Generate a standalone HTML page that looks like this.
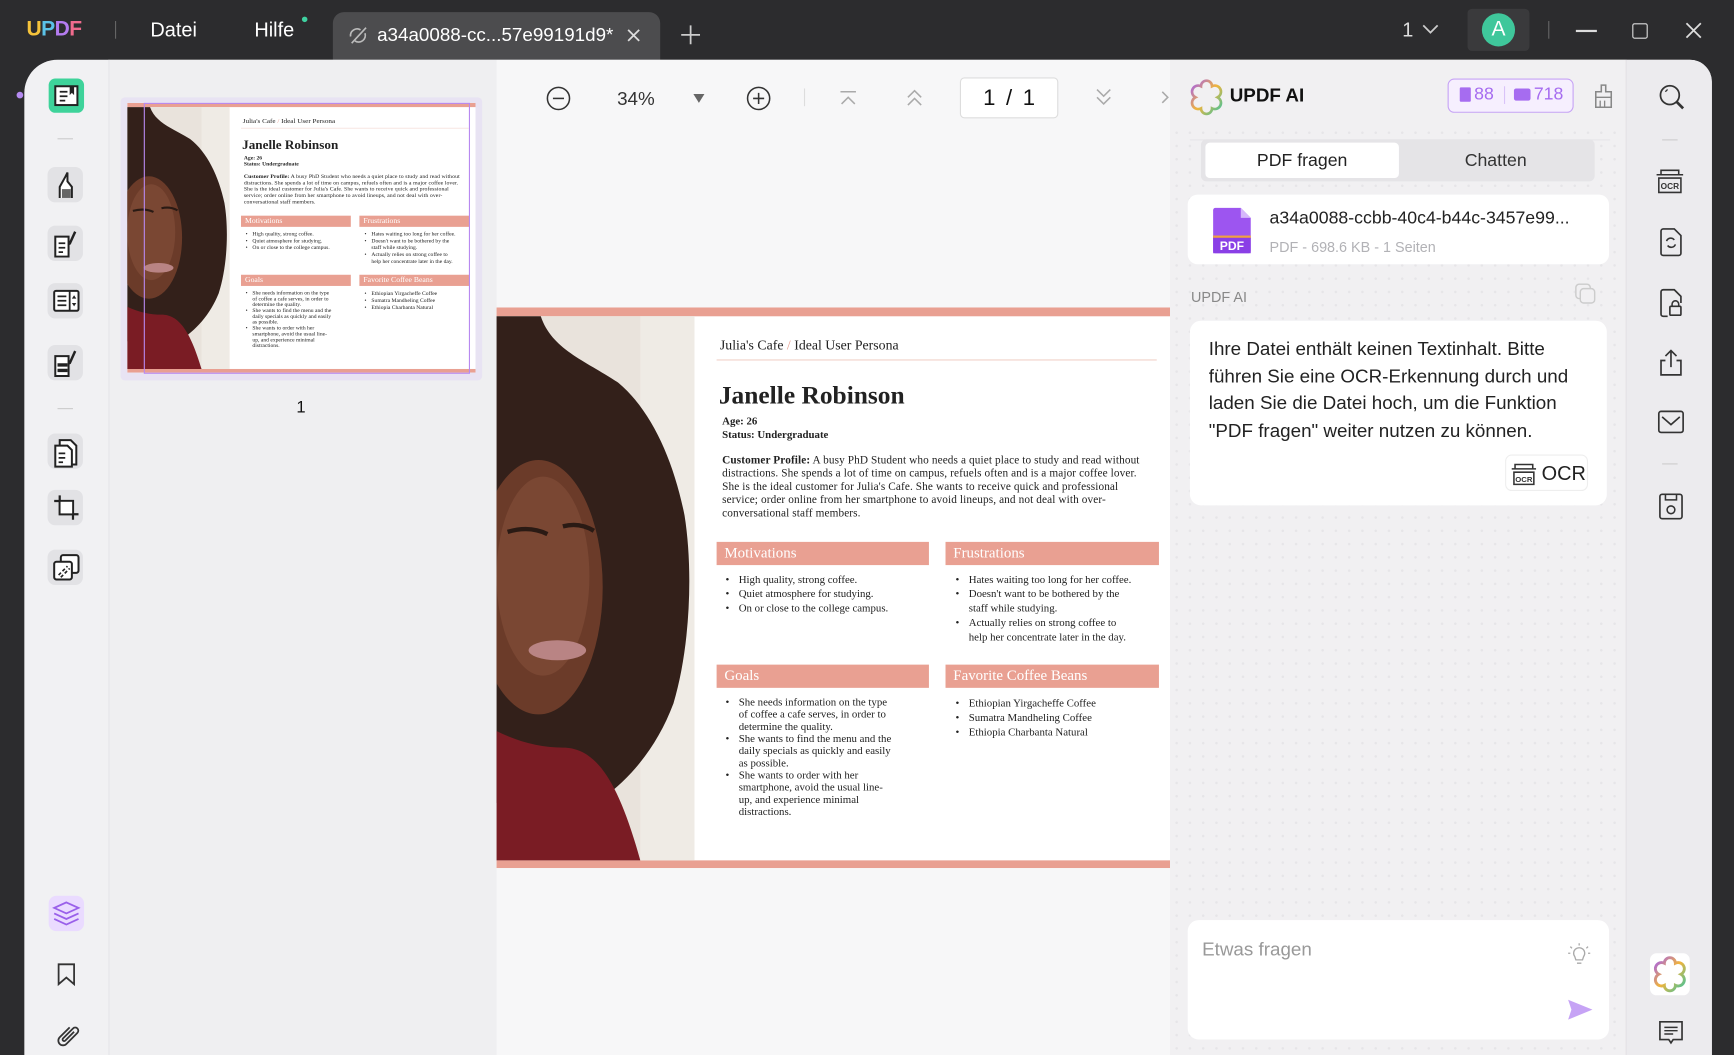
<!DOCTYPE html>
<html><head><meta charset="utf-8"><style>
*{box-sizing:border-box;margin:0;padding:0}
html,body{width:1734px;height:1055px;overflow:hidden;background:#2c2c2e}
#root{position:absolute;left:0;top:0;width:1568px;height:954px;transform:scale(1.10587);transform-origin:0 0;font-family:"Liberation Sans",sans-serif;background:#2c2c2e}
.a{position:absolute}
.t{color:#fff;font-size:18px}
.ic{position:absolute;width:32px;height:32px;border-radius:7px;background:#e2e2e5}
svg{position:absolute;overflow:visible}
.pg{position:absolute;width:609px;height:507px;background:#fff;font-family:"Liberation Serif",serif;color:#222;overflow:hidden}
.pg .bar{position:absolute;background:#e9a092;color:#fff;font-size:13.5px;padding:2px 7px;height:21px}
.pg ul{position:absolute;list-style:none;font-size:9.8px;line-height:13px}
.pg li{padding-left:17px;position:relative}
.pg li:before{content:"•";position:absolute;left:5px}
.pg .gl li{line-height:11px}
</style></head><body><div id="root">

<!-- title bar -->
<div class="a" style="left:24px;top:16px;font-weight:bold;font-size:19px;letter-spacing:-0.5px"><span style="color:#f5c33b">U</span><span style="color:#5bc2e7">P</span><span style="color:#b47cf0">D</span><span style="color:#f06b8d">F</span></div>
<div class="a" style="left:104px;top:19px;width:1px;height:16px;background:#666"></div>
<div class="a t" style="left:136px;top:17px">Datei</div>
<div class="a t" style="left:230px;top:17px">Hilfe</div>
<div class="a" style="left:273px;top:15px;width:5px;height:5px;border-radius:50%;background:#3fd1a0"></div>
<div class="a" style="left:301px;top:11px;width:296px;height:44px;background:#4c4c4e;border-radius:10px 10px 0 0"></div>
<svg style="left:314px;top:23px" width="20" height="18"><path d="M3 10a6 6 0 0 1 9-6M16 7a6 6 0 0 1-9 7M4 16L17 2" stroke="#bbb" stroke-width="1.5" fill="none"/></svg>
<div class="a t" style="left:341px;top:22px;font-size:17px">a34a0088-cc...57e99191d9*</div>
<svg style="left:567px;top:26px" width="12" height="12"><path d="M1 1L11 11M11 1L1 11" stroke="#ddd" stroke-width="1.6"/></svg>
<svg style="left:616px;top:23px" width="17" height="17"><path d="M8.5 0V17M0 8.5H17" stroke="#ccc" stroke-width="1.6"/></svg>
<div class="a t" style="left:1268px;top:17px;color:#ddd">1</div>
<svg style="left:1286px;top:22px" width="15" height="9"><path d="M1 1L7.5 7.5L14 1" stroke="#ccc" stroke-width="1.6" fill="none"/></svg>
<div class="a" style="left:1327px;top:8px;width:56px;height:38px;background:#3a3a3c;border-radius:4px"></div>
<div class="a" style="left:1340px;top:12px;width:30px;height:30px;border-radius:50%;background:#3fc79b;color:#fff;font-size:19px;text-align:center;line-height:30px">A</div>
<div class="a" style="left:1400px;top:19px;width:1px;height:16px;background:#666"></div>
<div class="a" style="left:1425px;top:27px;width:19px;height:1.5px;background:#ddd"></div>
<div class="a" style="left:1476px;top:21px;width:14px;height:14px;border:1.5px solid #ddd;border-radius:2px"></div>
<svg style="left:1524px;top:20px" width="15" height="15"><path d="M1 1L14 14M14 1L1 14" stroke="#ddd" stroke-width="1.6"/></svg>

<!-- main -->
<div class="a" style="left:22px;top:54px;width:1526px;height:900px;background:#f1f1f3;border-radius:30px 20px 0 0;overflow:hidden">
  <div class="a" style="left:76px;top:0;width:351px;height:900px;background:#efeff1;border-left:1px solid #e6e6e9"></div>
  <div class="a" style="left:427px;top:0;width:609px;height:900px;background:#f7f7f8"></div>
  <div class="a" style="left:1036px;top:0;width:412px;height:900px;background-color:#f1f0f2;background-image:radial-gradient(#e6e5e8 1px,transparent 1.3px);background-size:12px 12px"></div>
  <div class="a" style="left:1036px;top:0;width:412px;height:62px;background:#f1f0f2"></div>
  <div class="a" style="left:1448px;top:0;width:78px;height:900px;background:#ecebee;border-left:1px solid #e3e2e5"></div>
</div>
<div class="a" style="left:15px;top:83px;width:6px;height:6px;border-radius:50%;background:#b58af0"></div>

<!-- left toolbar icons -->
<div class="a" style="left:44px;top:71px;width:32px;height:31px;border-radius:6px;background:#3ed39a"></div>
<svg style="left:48px;top:76px" width="24" height="22"><rect x="2" y="2" width="20" height="17" fill="#fff" stroke="#222" stroke-width="1.8"/><path d="M6 7h7M6 11h7M6 15h5" stroke="#222" stroke-width="1.6"/><path d="M15 2v8l2-2 2 2V2z" fill="#222"/></svg>
<div class="a" style="left:52px;top:125px;width:14px;height:1px;background:#ccc"></div>
<div class="ic" style="left:43px;top:151px"></div>
<svg style="left:48px;top:154px" width="22" height="26"><path d="M6 25V15l5-9 2-4v8l4 5v10" fill="#fff" stroke="#222" stroke-width="1.8"/><path d="M8 25V17h8v8z" fill="#666"/></svg>
<div class="ic" style="left:43px;top:204px"></div>
<svg style="left:48px;top:207px" width="24" height="26"><path d="M2 7h12v18H2z" fill="#fff" stroke="#222" stroke-width="1.8"/><path d="M5 13h6M5 17h6M5 21h4" stroke="#222" stroke-width="1.6"/><path d="M19 2l2 1-5 11-2 1 0-2z" fill="#222"/></svg>
<div class="ic" style="left:43px;top:256px"></div>
<svg style="left:47px;top:261px" width="26" height="22"><rect x="2" y="2" width="22" height="18" rx="1.5" fill="#fff" stroke="#222" stroke-width="1.8"/><path d="M16 2v18M5 7h8M5 11h8M5 15h8" stroke="#222" stroke-width="1.6"/><path d="M18 9l2-3 2 3zM18 13l2 3 2-3z" fill="#222"/></svg>
<div class="ic" style="left:43px;top:312px"></div>
<svg style="left:48px;top:315px" width="24" height="26"><path d="M2 7h12v18H2z" fill="#fff" stroke="#222" stroke-width="1.8"/><path d="M4 15h9M4 20h9" stroke="#222" stroke-width="3"/><path d="M19 2l2 1-5 11-2 1 0-2z" fill="#222"/></svg>
<div class="a" style="left:52px;top:369px;width:14px;height:1px;background:#ccc"></div>
<div class="ic" style="left:43px;top:392px"></div>
<svg style="left:47px;top:396px" width="26" height="26"><path d="M7 2h10l5 5v17H7z" fill="#fff" stroke="#222" stroke-width="1.8"/><path d="M3 7h11l4 4v15H3z" fill="#fff" stroke="#222" stroke-width="1.8"/><path d="M6 14h6M6 18h6M6 22h4" stroke="#222" stroke-width="1.6"/></svg>
<div class="ic" style="left:43px;top:443px"></div>
<svg style="left:47px;top:446px" width="26" height="26"><path d="M7 2v17h17M2 7h17v17" fill="none" stroke="#222" stroke-width="2"/><rect x="7" y="7" width="12" height="12" fill="#fff" stroke="#222" stroke-width="1.5"/></svg>
<div class="ic" style="left:43px;top:497px"></div>
<svg style="left:47px;top:500px" width="26" height="26"><rect x="8" y="2" width="16" height="16" rx="2" fill="#fff" stroke="#222" stroke-width="1.8"/><rect x="2" y="8" width="16" height="16" rx="2" fill="#fff" stroke="#222" stroke-width="1.8"/><path d="M6 20l8-8M8 22l8-8" stroke="#222" stroke-width="1.5" stroke-dasharray="3 2"/></svg>
<div class="a" style="left:44px;top:810px;width:32px;height:32px;border-radius:7px;background:#eadbff"></div>
<svg style="left:47px;top:814px" width="26" height="24"><path d="M13 2l11 5-11 5L2 7z" fill="none" stroke="#9a60ea" stroke-width="1.6"/><path d="M2 12l11 5 11-5M2 17l11 5 11-5" fill="none" stroke="#9a60ea" stroke-width="1.6"/></svg>
<svg style="left:51px;top:870px" width="18" height="22"><path d="M2 2h14v18l-7-6-7 6z" fill="none" stroke="#333" stroke-width="1.6"/></svg>
<svg style="left:49px;top:924px" width="24" height="24"><path d="M14 5L5 14a4 4 0 0 0 6 6l10-10a2.6 2.6 0 0 0-4-4L8 15a1.2 1.2 0 0 0 2 2l8-8" fill="none" stroke="#333" stroke-width="1.6"/></svg>

<!-- thumbnail -->
<div class="a" style="left:109px;top:88px;width:327px;height:256px;background:#e8e3f3;border-radius:4px"></div>
<div id="thumbwrap" class="a" style="left:115px;top:93px;width:315px;height:244px;overflow:hidden">
 <div id="thumbpg" style="transform:scale(0.5172,0.4813);transform-origin:0 0;position:absolute;left:0;top:0"></div>
</div>
<div class="a" style="left:130px;top:93px;width:295px;height:245px;border:1.5px solid #b889f0"></div>
<div class="a" style="left:268px;top:360px;font-size:15px;color:#111">1</div>

<!-- doc toolbar -->
<svg style="left:494px;top:78px" width="22" height="22"><circle cx="11" cy="11" r="10" fill="none" stroke="#333" stroke-width="1.4"/><path d="M6 11h10" stroke="#333" stroke-width="1.4"/></svg>
<div class="a" style="left:558px;top:80px;font-size:17px;color:#333">34%</div>
<svg style="left:627px;top:85px" width="10" height="8"><path d="M0 0h10L5 8z" fill="#666"/></svg>
<svg style="left:675px;top:78px" width="22" height="22"><circle cx="11" cy="11" r="10" fill="none" stroke="#333" stroke-width="1.4"/><path d="M6 11h10M11 6v10" stroke="#333" stroke-width="1.4"/></svg>
<div class="a" style="left:727px;top:80px;width:1px;height:16px;background:#ddd"></div>
<svg style="left:759px;top:82px" width="16" height="13"><path d="M1 1h14M2 12l6-6 6 6" fill="none" stroke="#aaa" stroke-width="1.4"/></svg>
<svg style="left:819px;top:80px" width="16" height="16"><path d="M2 8l6-6 6 6M2 15l6-6 6 6" fill="none" stroke="#aaa" stroke-width="1.4"/></svg>
<div class="a" style="left:868px;top:70px;width:89px;height:37px;background:#fff;border:1px solid #ddd;border-radius:4px;font-size:20px;color:#111;text-align:center;line-height:36px;word-spacing:4px">1 / 1</div>
<svg style="left:990px;top:80px" width="16" height="16"><path d="M2 1l6 6 6-6M2 8l6 6 6-6" fill="none" stroke="#aaa" stroke-width="1.4"/></svg>
<svg style="left:1050px;top:82px" width="8" height="12"><path d="M1 1l5 5-5 5" fill="none" stroke="#aaa" stroke-width="1.4"/></svg>

<!-- main page -->
<div id="mainpg" class="a" style="left:449px;top:278px"></div>

<!-- AI panel -->
<svg style="left:1078px;top:75px" width="26" height="26"><defs><linearGradient id="g1" x1="0" y1="0" x2="1" y2="1"><stop offset="0" stop-color="#a35cf0"/><stop offset="0.5" stop-color="#f0b43c"/><stop offset="1" stop-color="#3cc4a0"/></linearGradient></defs><path d="M8 3a5 5 0 0 1 10 0 5 5 0 0 1 5 10 5 5 0 0 1-5 10 5 5 0 0 1-10 0A5 5 0 0 1 3 13 5 5 0 0 1 8 3z" fill="none" stroke="url(#g1)" stroke-width="2.4"/></svg>
<div class="a" style="left:1112px;top:77px;font-size:17px;font-weight:bold;color:#111">UPDF AI</div>
<div class="a" style="left:1309px;top:71px;width:114px;height:31px;border:1.5px solid #c6a3f5;border-radius:6px;background:#f6effe"></div>
<div class="a" style="left:1320px;top:79px;width:10px;height:13px;background:#a66cf0;border-radius:1px"></div>
<div class="a" style="left:1333px;top:77px;font-size:16px;color:#a66cf0">88</div>
<div class="a" style="left:1360px;top:78px;width:1px;height:16px;background:#d9c3f8"></div>
<div class="a" style="left:1369px;top:80px;width:15px;height:11px;background:#a66cf0;border-radius:2px"></div>
<div class="a" style="left:1387px;top:77px;font-size:16px;color:#a66cf0">718</div>
<svg style="left:1441px;top:76px" width="18" height="22"><path d="M7 1h4v6h5v14H2V7h5z" fill="none" stroke="#888" stroke-width="1.4"/><path d="M2 12h14M6 15v6M10 15v6" stroke="#888" stroke-width="1.2"/></svg>
<div class="a" style="left:1076px;top:126px;width:380px;height:1px;background:#e6e5e8"></div>
<div class="a" style="left:1086px;top:126px;width:356px;height:38px;background:#e5e4e7;border-radius:5px"></div>
<div class="a" style="left:1090px;top:129px;width:175px;height:32px;background:#fff;border-radius:4px;text-align:center;line-height:34px;font-size:16px;color:#222">PDF fragen</div>
<div class="a" style="left:1265px;top:129px;width:175px;height:32px;text-align:center;line-height:34px;font-size:16px;color:#333">Chatten</div>
<div class="a" style="left:1074px;top:176px;width:381px;height:63px;background:#fff;border-radius:9px"></div>
<svg style="left:1097px;top:188px" width="34" height="41"><path d="M0 2a2 2 0 0 1 2-2h23l9 9v30a2 2 0 0 1-2 2H2a2 2 0 0 1-2-2z" fill="#9d55f0"/><path d="M25 0v9h9z" fill="#d6b8fb"/><rect x="0" y="25" width="34" height="3" fill="#f0a040"/><rect x="0" y="27" width="34" height="14" fill="#8a3fe6"/><text x="17" y="38" font-size="11" font-weight="bold" fill="#fff" text-anchor="middle" font-family="Liberation Sans">PDF</text></svg>
<div class="a" style="left:1148px;top:189px;font-size:16px;color:#222">a34a0088-ccbb-40c4-b44c-3457e99...</div>
<div class="a" style="left:1148px;top:216px;font-size:13px;color:#b2b2b6">PDF - 698.6 KB - 1 Seiten</div>
<div class="a" style="left:1077px;top:261px;font-size:13px;color:#888">UPDF AI</div>
<svg style="left:1424px;top:256px" width="20" height="20"><rect x="1" y="1" width="13" height="13" rx="3" fill="none" stroke="#ccc" stroke-width="1.3"/><rect x="5" y="5" width="13" height="13" rx="3" fill="#f1f0f2" stroke="#ccc" stroke-width="1.3"/></svg>
<div class="a" style="left:1076px;top:290px;width:377px;height:167px;background:#fff;border-radius:10px"></div>
<div class="a" style="left:1093px;top:304px;width:350px;font-size:17px;line-height:24.5px;color:#222">Ihre Datei enthält keinen Textinhalt. Bitte führen Sie eine OCR-Erkennung durch und laden Sie die Datei hoch, um die Funktion "PDF fragen" weiter nutzen zu können.</div>
<div class="a" style="left:1361px;top:411px;width:75px;height:33px;border:1px solid #eee;border-radius:6px"></div>
<svg style="left:1366px;top:416px" width="24" height="24"><path d="M4 8V4h16v4M1 8h22M3 11h18v11H3z" fill="none" stroke="#333" stroke-width="1.4"/><text x="12" y="20" font-size="7" font-weight="bold" text-anchor="middle" fill="#333" font-family="Liberation Sans">OCR</text></svg>
<div class="a" style="left:1394px;top:418px;font-size:18px;color:#222">OCR</div>
<div class="a" style="left:1074px;top:832px;width:381px;height:108px;background:#fff;border-radius:10px"></div>
<div class="a" style="left:1087px;top:849px;font-size:17px;color:#999">Etwas fragen</div>
<svg style="left:1417px;top:852px" width="22" height="22"><path d="M7 13a5 5 0 1 1 8 0l-1 3H8z" fill="none" stroke="#aaa" stroke-width="1.2"/><path d="M9 19h4M11 1v2M3 4l1.5 1.5M19 4l-1.5 1.5M1 10h2M19 10h2" stroke="#aaa" stroke-width="1.2"/></svg>
<svg style="left:1418px;top:904px" width="22" height="18"><path d="M0 0l22 9-22 9 3-9z" fill="#c6a3f5"/></svg>

<!-- right bar icons -->
<svg style="left:1499px;top:75px" width="26" height="26"><circle cx="11" cy="11" r="8.5" fill="none" stroke="#333" stroke-width="1.6"/><path d="M17 17l6 6" stroke="#333" stroke-width="2.4"/><path d="M7 8a5 5 0 0 1 2-2" stroke="#333" stroke-width="1.2" fill="none"/></svg>
<div class="a" style="left:1503px;top:126px;width:14px;height:1px;background:#ccc"></div>
<svg style="left:1497px;top:151px" width="26" height="26"><path d="M5 7V3h16v4M1 7h24M3 10h20v13H3z" fill="none" stroke="#333" stroke-width="1.4"/><text x="13" y="20" font-size="7.5" font-weight="bold" text-anchor="middle" fill="#333" font-family="Liberation Sans">OCR</text></svg>
<svg style="left:1500px;top:206px" width="22" height="26"><path d="M2 3a2 2 0 0 1 2-2h10l6 6v16a2 2 0 0 1-2 2H4a2 2 0 0 1-2-2z" fill="none" stroke="#333" stroke-width="1.5"/><path d="M7 12a4 4 0 0 1 7-1M15 15a4 4 0 0 1-7 1" fill="none" stroke="#333" stroke-width="1.4"/></svg>
<svg style="left:1500px;top:261px" width="22" height="26"><path d="M8 25H4a2 2 0 0 1-2-2V3a2 2 0 0 1 2-2h10l6 6v6" fill="none" stroke="#333" stroke-width="1.5"/><rect x="10" y="16" width="10" height="8" rx="1" fill="none" stroke="#333" stroke-width="1.5"/><path d="M12 16v-2a3 3 0 0 1 6 0v2" fill="none" stroke="#333" stroke-width="1.4"/></svg>
<svg style="left:1500px;top:315px" width="22" height="26"><path d="M6 11H2v13h18V11h-4M11 17V2M6 7l5-5 5 5" fill="none" stroke="#333" stroke-width="1.5"/></svg>
<svg style="left:1499px;top:371px" width="24" height="22"><rect x="1" y="1" width="22" height="19" rx="2" fill="none" stroke="#333" stroke-width="1.5"/><path d="M4 6l8 7 8-7" fill="none" stroke="#333" stroke-width="1.5"/></svg>
<div class="a" style="left:1503px;top:419px;width:14px;height:1px;background:#ccc"></div>
<svg style="left:1500px;top:446px" width="22" height="24"><path d="M1 3a2 2 0 0 1 2-2h16a2 2 0 0 1 2 2v18a2 2 0 0 1-2 2H3a2 2 0 0 1-2-2z" fill="none" stroke="#333" stroke-width="1.5"/><path d="M6 1v5h10V1" fill="none" stroke="#333" stroke-width="1.4"/><circle cx="11" cy="15" r="3.5" fill="none" stroke="#333" stroke-width="1.4"/></svg>
<div class="a" style="left:1492px;top:862px;width:36px;height:38px;background:#fff;border-radius:6px"></div>
<svg style="left:1497px;top:868px" width="26" height="26"><path d="M8 3a5 5 0 0 1 10 0 5 5 0 0 1 5 10 5 5 0 0 1-5 10 5 5 0 0 1-10 0A5 5 0 0 1 3 13 5 5 0 0 1 8 3z" fill="none" stroke="url(#g1)" stroke-width="2.6"/></svg>
<svg style="left:1500px;top:922px" width="22" height="24"><path d="M1 2h20v16h-8l-2 3-2-3H1z" fill="none" stroke="#333" stroke-width="1.5"/><path d="M5 7h12M5 10h12M5 13h8" stroke="#333" stroke-width="1.3"/></svg>

<template id="pgtpl">
<div class="pg">
 <div style="position:absolute;left:0;top:0;width:609px;height:8px;background:#e9a092"></div>
 <div style="position:absolute;left:0;bottom:0;width:609px;height:7px;background:#e9a092"></div>
 <svg style="left:0;top:8px" width="179" height="492" viewBox="0 0 179 492">
  <rect width="179" height="492" fill="#e9e3dc"/>
  <rect x="130" width="49" height="492" fill="#efebe5"/>
  <path d="M0 0h40c10 30 40 40 70 60 30 25 50 70 60 120 8 50 5 120-10 170-15 40-40 70-70 90H0z" fill="#33201a"/>
  <ellipse cx="38" cy="245" rx="58" ry="115" fill="#6b3b29"/>
  <ellipse cx="42" cy="235" rx="42" ry="90" fill="#7a4733"/>
  <path d="M10 195q20-6 36 2M60 190q15-4 28 4" stroke="#2a1a14" stroke-width="4" fill="none"/>
  <ellipse cx="55" cy="302" rx="26" ry="9" fill="#b98484"/>
  <path d="M0 375c20 10 40 15 60 15 30 0 50 30 70 102H0z" fill="#7a1c24"/>
 </svg>
 <div style="position:absolute;left:202px;top:27px;font-size:12.5px">Julia's Cafe <span style="color:#e9a092">/</span> Ideal User Persona</div>
 <div style="position:absolute;left:199px;top:47px;width:398px;height:1px;background:#f0d0c8"></div>
 <div style="position:absolute;left:201px;top:67px;font-size:23px;font-weight:bold">Janelle Robinson</div>
 <div style="position:absolute;left:204px;top:98px;font-size:9.8px;font-weight:bold;line-height:12px">Age: 26<br>Status: Undergraduate</div>
 <div style="position:absolute;left:204px;top:133px;width:392px;font-size:10.2px;line-height:12px;letter-spacing:0.1px"><b>Customer Profile:</b> A busy PhD Student who needs a quiet place to study and read without distractions. She spends a lot of time on campus, refuels often and is a major coffee lover. She is the ideal customer for Julia's Cafe. She wants to receive quick and professional service; order online from her smartphone to avoid lineups, and not deal with over-conversational staff members.</div>
 <div class="bar" style="left:199px;top:212px;width:192px">Motivations</div>
 <div class="bar" style="left:406px;top:212px;width:193px">Frustrations</div>
 <ul style="left:202px;top:240px"><li>High quality, strong coffee.</li><li>Quiet atmosphere for studying.</li><li>On or close to the college campus.</li></ul>
 <ul style="left:410px;top:240px"><li>Hates waiting too long for her coffee.</li><li>Doesn't want to be bothered by the<br>staff while studying.</li><li>Actually relies on strong coffee to<br>help her concentrate later in the day.</li></ul>
 <div class="bar" style="left:199px;top:323px;width:192px">Goals</div>
 <div class="bar" style="left:406px;top:323px;width:193px">Favorite Coffee Beans</div>
 <ul class="gl" style="left:202px;top:352px"><li>She needs information on the type<br>of coffee a cafe serves, in order to<br>determine the quality.</li><li>She wants to find the menu and the<br>daily specials as quickly and easily<br>as possible.</li><li>She wants to order with her<br>smartphone, avoid the usual line-<br>up, and experience minimal<br>distractions.</li></ul>
 <ul style="left:410px;top:352px"><li>Ethiopian Yirgacheffe Coffee</li><li>Sumatra Mandheling Coffee</li><li>Ethiopia Charbanta Natural</li></ul>
</div>
</template>
<script>
var t=document.getElementById('pgtpl');
document.getElementById('mainpg').appendChild(t.content.cloneNode(true));
document.getElementById('thumbpg').appendChild(t.content.cloneNode(true));
</script>
</div></body></html>
